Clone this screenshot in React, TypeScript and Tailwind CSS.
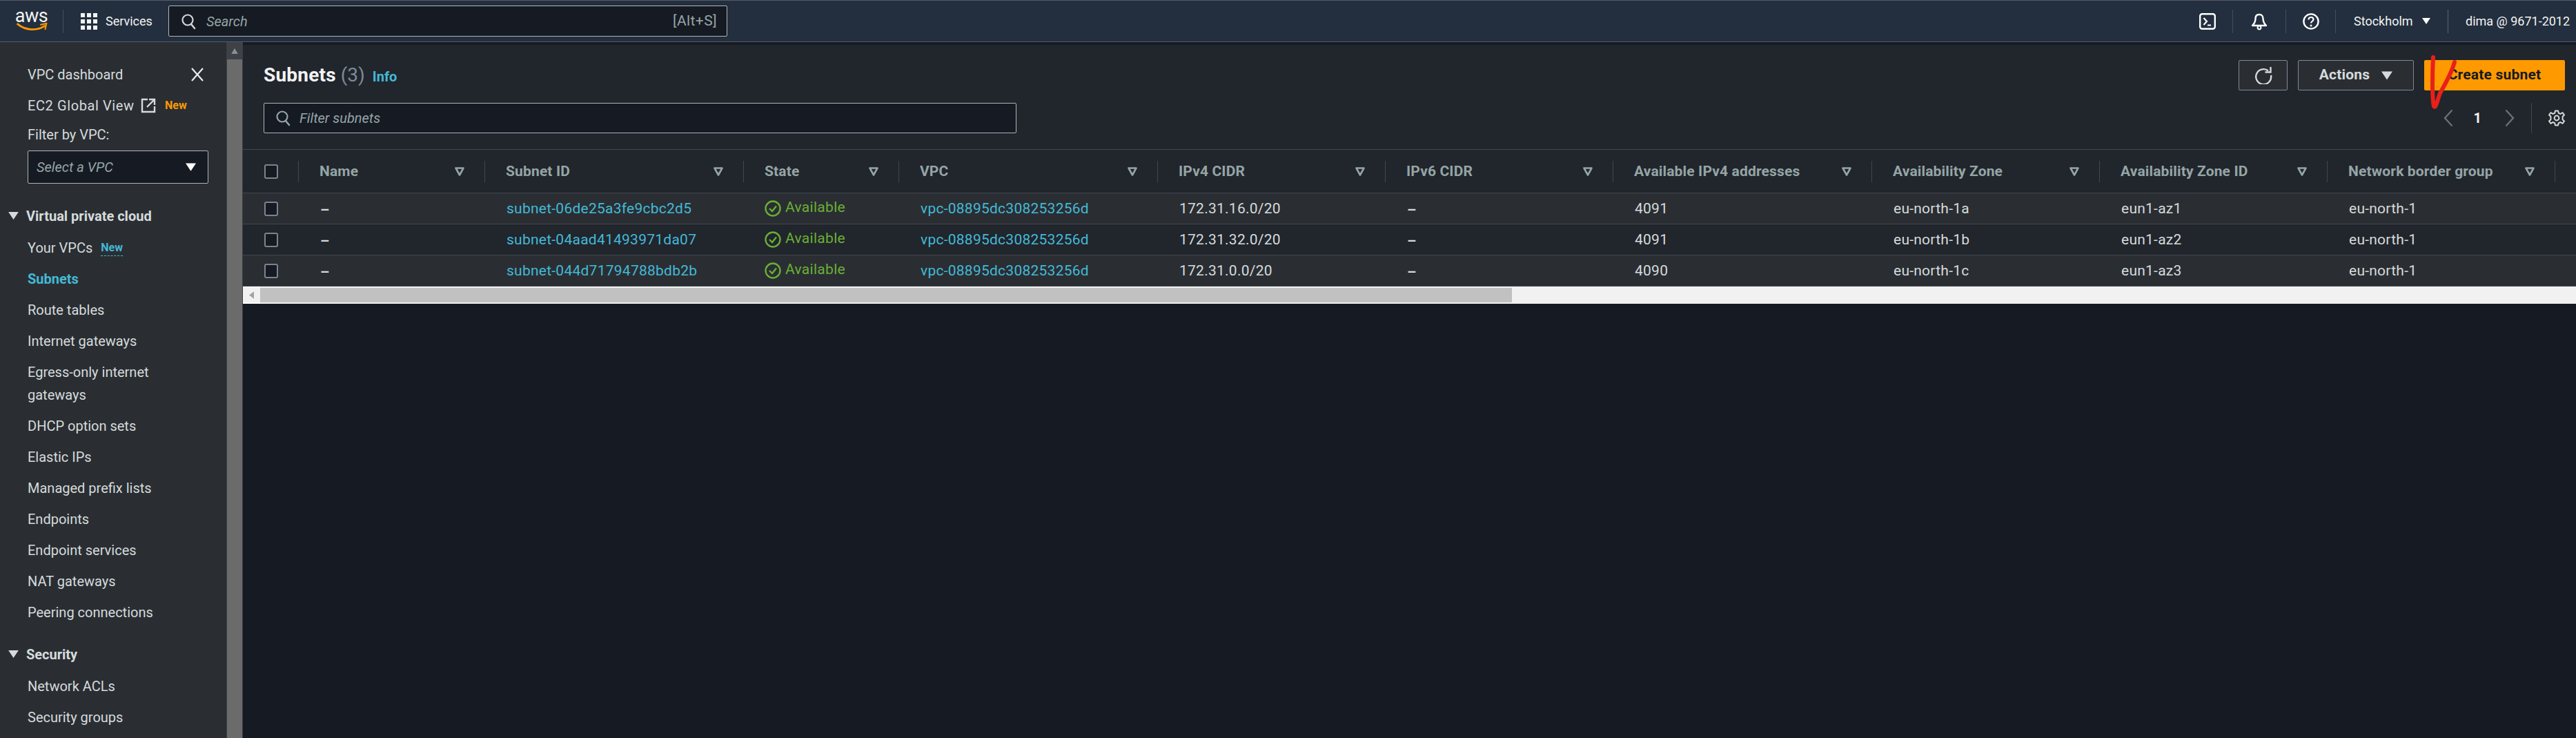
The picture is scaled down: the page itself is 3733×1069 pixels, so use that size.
import React from "react";

const F = "font-['Roboto','Liberation_Sans',sans-serif]";

function Caret({ className = "" }: { className?: string }) {
  return (
    <svg viewBox="0 0 16 12" className={className} aria-hidden="true">
      <path d="M0 0H16L8 12Z" fill="currentColor" />
    </svg>
  );
}

function Funnel() {
  return (
    <svg viewBox="0 0 14 13" className="h-[13px] w-[14px] shrink-0 text-[#95a5a6]" aria-hidden="true">
      <path d="M1.5 1.5H12.5L7 11.5Z" fill="none" stroke="currentColor" strokeWidth="2.6" strokeLinejoin="round" />
    </svg>
  );
}

function SearchIcon({ color }: { color: string }) {
  return (
    <svg viewBox="0 0 24 24" className={`h-[24px] w-[24px] ${color}`} aria-hidden="true">
      <circle cx="11" cy="10" r="7.5" fill="none" stroke="currentColor" strokeWidth="2.2" />
      <path d="M16 16L21 22" stroke="currentColor" strokeWidth="2.6" strokeLinecap="round" />
    </svg>
  );
}

function Check() {
  return <div className="h-[21px] w-[20px] rounded-[3px] border-2 border-[#7b848c] bg-[#161a23]" />;
}

function Divider({ strong = false }: { strong?: boolean }) {
  return <div className={`h-[34px] w-px ${strong ? "bg-[#5a6472]" : "bg-[#414d5c]"}`} />;
}

function TopBar() {
  return (
    <header className="flex h-[61px] shrink-0 items-center border-y border-y-[#545b64] bg-[#232f3e] text-white">
      <div className="flex w-[91px] shrink-0 flex-col items-center">
        <span className="mt-[-4px] text-[27px] leading-[22px] tracking-[-0.5px] text-[#f2f3f3]">aws</span>
        <svg viewBox="0 0 48 14" className="mt-[-1px] h-[13px] w-[48px]" aria-hidden="true">
          <path d="M2 2C14 12 32 13 44 5" fill="none" stroke="#ff9900" strokeWidth="3" strokeLinecap="round" />
          <path d="M38 3L47 1L45 10" fill="none" stroke="#ff9900" strokeWidth="2.2" strokeLinecap="round" />
        </svg>
      </div>
      <Divider />
      <svg viewBox="0 0 24 24" className="ml-[25px] h-[24px] w-[24px] shrink-0" aria-hidden="true">
        <g fill="#f2f3f3">
          <rect x="0" y="0" width="6" height="6" /><rect x="9" y="0" width="6" height="6" /><rect x="18" y="0" width="6" height="6" />
          <rect x="0" y="9" width="6" height="6" /><rect x="9" y="9" width="6" height="6" /><rect x="18" y="9" width="6" height="6" />
          <rect x="0" y="18" width="6" height="6" /><rect x="9" y="18" width="6" height="6" /><rect x="18" y="18" width="6" height="6" />
        </g>
      </svg>
      <span className="ml-[12px] w-[91px] shrink-0 text-[18px] text-[#f2f3f3]">Services</span>
      <div className="flex h-[45px] w-[810px] shrink-0 items-center rounded-[2px] border border-[#aab7b8] bg-[#161a23] pl-[16px] pr-[14px]">
        <SearchIcon color="text-[#d1d5db]" />
        <span className="ml-[14px] flex-1 text-[20px] italic text-[#95a5a6]">Search</span>
        <span className="text-[21px] tracking-[0.4px] text-[#95a5a6]">[Alt+S]</span>
      </div>
      <div className="flex-1" />
      <svg viewBox="0 0 24 24" className="h-[24px] w-[24px] shrink-0" aria-hidden="true">
        <rect x="1.2" y="1.2" width="21.6" height="21.6" rx="3" fill="none" stroke="#fff" strokeWidth="2.4" />
        <path d="M6.5 7L11 12L6.5 17" fill="none" stroke="#fff" strokeWidth="2.2" />
        <path d="M12 17.5H17" stroke="#fff" strokeWidth="2" />
      </svg>
      <div className="ml-[24px]"><Divider /></div>
      <div className="flex w-[76px] shrink-0 justify-center">
        <svg viewBox="0 0 24 24" className="h-[26px] w-[24px]" aria-hidden="true">
          <path d="M12 2C8 2 6.5 5 6.5 8C6.5 13 5 15 2 18H22C19 15 17.5 13 17.5 8C17.5 5 16 2 12 2Z" fill="none" stroke="#fff" strokeWidth="2.4" strokeLinejoin="round" />
          <circle cx="12" cy="21" r="2.4" fill="none" stroke="#fff" strokeWidth="2" />
        </svg>
      </div>
      <Divider />
      <div className="flex w-[71px] shrink-0 justify-center">
        <svg viewBox="0 0 24 24" className="h-[24px] w-[24px]" aria-hidden="true">
          <circle cx="12" cy="12" r="10.6" fill="none" stroke="#fff" strokeWidth="2.4" />
          <path d="M8.5 9.5C8.5 7.3 10 6 12 6C14 6 15.5 7.3 15.5 9.2C15.5 11.5 12 12 12 14.6" fill="none" stroke="#fff" strokeWidth="2.2" />
          <circle cx="12" cy="18" r="1.5" fill="#fff" />
        </svg>
      </div>
      <Divider />
      <span className="ml-[26px] w-[88px] shrink-0 whitespace-nowrap text-[18px] text-[#f2f3f3]">Stockholm</span>
      <Caret className="ml-[11px] h-[9px] w-[12px] shrink-0 text-white" />
      <div className="ml-[25px]"><Divider strong /></div>
      <span className="ml-[25px] w-[160px] shrink-0 overflow-hidden whitespace-nowrap text-[18px] text-[#f2f3f3]">dima @ 9671-2012</span>
    </header>
  );
}

function NavItem({ children, active = false }: { children: React.ReactNode; active?: boolean }) {
  return (
    <div className={`flex min-h-[45px] items-center pb-[4px] pl-[40px] pr-[70px] pt-[8px] text-[20px] leading-[33px] ${active ? "font-bold text-[#44b9d6]" : "text-[#d5dbdb]"}`}>
      {children}
    </div>
  );
}

function NavHeading({ children, className = "" }: { children: React.ReactNode; className?: string }) {
  return (
    <div className={`flex h-[45px] items-center whitespace-nowrap pl-[12px] text-[20px] font-bold text-[#d5dbdb] ${className}`}>
      <Caret className="h-[11px] w-[15px] shrink-0" />
      <span className="ml-[11px]">{children}</span>
    </div>
  );
}

function Sidebar() {
  return (
    <aside className="flex w-[328px] shrink-0 flex-col overflow-hidden bg-[#2a2e33] pt-[24px]">
      <div className="flex h-[45px] items-center pl-[40px] pr-[32px] text-[20px] text-[#d5dbdb]">
        <span className="flex-1">VPC dashboard</span>
        <svg viewBox="0 0 20 20" className="h-[20px] w-[20px] text-[#eaeded]" aria-hidden="true">
          <path d="M2 1L18 19M18 1L2 19" stroke="currentColor" strokeWidth="2.2" />
        </svg>
      </div>
      <div className="flex h-[45px] items-center pl-[40px] text-[20px] text-[#d5dbdb]">
        <span className="w-[160px] whitespace-nowrap tracking-[0.6px]">EC2 Global View</span>
        <svg viewBox="0 0 22 22" className="ml-[4px] h-[22px] w-[22px]" aria-hidden="true">
          <path d="M10 2H2V20H20V12" fill="none" stroke="#d5dbdb" strokeWidth="2.4" />
          <path d="M9 13L19 3M12 2H20V10" fill="none" stroke="#d5dbdb" strokeWidth="2.4" />
        </svg>
        <span className="ml-[13px] text-[16px] font-bold text-[#ff9900]">New</span>
      </div>
      <div className="ml-[40px] flex h-[40px] items-center text-[20px] text-[#d5dbdb]">Filter by VPC:</div>
      <div className="ml-[40px] mt-[3px] flex h-[48px] w-[262px] items-center justify-between rounded-[2px] border border-[#aab7b8] bg-[#161a23] pl-[12px] pr-[17px]">
        <span className="text-[20px] italic text-[#95a5a6]">Select a VPC</span>
        <Caret className="h-[12px] w-[15px] text-white" />
      </div>
      <NavHeading className="mt-[24px]">Virtual private cloud</NavHeading>
      <NavItem>
        <span className="whitespace-nowrap">Your VPCs</span>
        <span className="ml-[12px] border-b border-dashed border-[#44b9d6] text-[16px] leading-[22px] font-bold text-[#44b9d6]">New</span>
      </NavItem>
      <NavItem active>Subnets</NavItem>
      <NavItem>Route tables</NavItem>
      <NavItem>Internet gateways</NavItem>
      <NavItem>Egress-only internet gateways</NavItem>
      <NavItem>DHCP option sets</NavItem>
      <NavItem>Elastic IPs</NavItem>
      <NavItem>Managed prefix lists</NavItem>
      <NavItem>Endpoints</NavItem>
      <NavItem>Endpoint services</NavItem>
      <NavItem>NAT gateways</NavItem>
      <NavItem>Peering connections</NavItem>
      <NavHeading className="mt-[17px]">Security</NavHeading>
      <NavItem>Network ACLs</NavItem>
      <NavItem>Security groups</NavItem>
    </aside>
  );
}

function SideScrollbar() {
  return (
    <div className="flex w-[24px] shrink-0 flex-col border-x border-x-[#3a3f45] bg-[#3e4247]">
      <div className="flex h-[25px] items-center justify-center">
        <svg viewBox="0 0 12 10" className="h-[8px] w-[10px] text-[#8a8f94]" aria-hidden="true">
          <path d="M0 10L6 0L12 10Z" fill="currentColor" />
        </svg>
      </div>
      <div className="flex-1 bg-[#6b6b6b]" />
    </div>
  );
}

const columns = "grid-cols-[81px_270px_375px_225px_375px_330px_330px_375px_330px_330px_330px_1fr]";
const heads = ["Name", "Subnet ID", "State", "VPC", "IPv4 CIDR", "IPv6 CIDR", "Available IPv4 addresses", "Availability Zone", "Availability Zone ID", "Network border group"];

const rows = [
  ["subnet-06de25a3fe9cbc2d5", "172.31.16.0/20", "4091", "eu-north-1a", "eun1-az1"],
  ["subnet-04aad41493971da07", "172.31.32.0/20", "4091", "eu-north-1b", "eun1-az2"],
  ["subnet-044d71794788bdb2b", "172.31.0.0/20", "4090", "eu-north-1c", "eun1-az3"],
];

function StateCell() {
  return (
    <div className="flex items-center pl-[30px] text-[#6aaf35]">
      <svg viewBox="0 0 24 24" className="h-[24px] w-[24px] shrink-0" aria-hidden="true">
        <circle cx="12" cy="12" r="10.5" fill="none" stroke="currentColor" strokeWidth="2.4" />
        <path d="M7 12L11 16L17 8.5" fill="none" stroke="currentColor" strokeWidth="2.4" />
      </svg>
      <span className="ml-[6px] mt-[-3px] text-[21px] tracking-[0.3px]">Available</span>
    </div>
  );
}

function Cell({ children, link = false }: { children: React.ReactNode; link?: boolean }) {
  return (
    <div className={`flex items-center pl-[31px] pt-[2px] text-[21px] tracking-[0.25px] whitespace-nowrap ${link ? "text-[#44b9d6]" : "text-[#d5dbdb]"}`}>
      {children}
    </div>
  );
}

function Dash() {
  return <div className="flex items-center pl-[31px] pt-[5px] text-[21px] font-bold text-[#d5dbdb]">–</div>;
}

function SubnetTable() {
  return (
    <div>
      <div className={`grid h-[64px] ${columns} items-center border-y border-y-[#414750] bg-[#21252c]`}>
        <div className="flex h-[31px] items-center border-r border-r-[#414750] pl-[31px]"><Check /></div>
        {heads.map((h) => (
          <div key={h} className="flex h-[31px] items-center justify-between whitespace-nowrap border-r border-r-[#414750] pl-[30px] pr-[29px] text-[21px] font-bold tracking-[0.15px] text-[#95a5a6]">
            <span className="pt-[2px]">{h}</span>
            <Funnel />
          </div>
        ))}
      </div>
      {rows.map((r, i) => (
        <div key={r[0]} className={`grid h-[45px] ${columns} border-b border-b-[#414750] ${i % 2 === 0 ? "bg-[#2a2e33]" : "bg-[#21252c]"}`}>
          <div className="flex items-center pl-[31px]"><Check /></div>
          <Dash />
          <Cell link>{r[0]}</Cell>
          <StateCell />
          <Cell link>vpc-08895dc308253256d</Cell>
          <Cell>{r[1]}</Cell>
          <Dash />
          <Cell>{r[2]}</Cell>
          <Cell>{r[3]}</Cell>
          <Cell>{r[4]}</Cell>
          <Cell>eu-north-1</Cell>
          <div />
        </div>
      ))}
      <div className="flex h-[25px] items-center bg-[#f1f1f1]">
        <div className="flex h-full w-[25px] items-center justify-center border-y-2 border-y-white">
          <svg viewBox="0 0 8 12" className="h-[11px] w-[7px] text-[#a3a3a3]" aria-hidden="true">
            <path d="M8 0V12L0 6Z" fill="currentColor" />
          </svg>
        </div>
        <div className="h-[21px] w-[1814px] bg-[#c1c1c1]" />
      </div>
    </div>
  );
}

function Panel() {
  return (
    <section className="bg-[#21252c]">
      <div className="flex items-start justify-between pb-[23px] pl-[30px] pr-[16px] pt-[22px]">
        <div className="flex flex-col">
          <div className="flex h-[44px] items-center">
            <h1 className="text-[28px] font-bold tracking-[0.2px] text-[#f2f3f3]">Subnets</h1>
            <span className="ml-[7px] text-[28px] text-[#7d8998]">(3)</span>
            <span className="ml-[11px] mt-[3px] text-[20px] font-bold text-[#44b9d6]">Info</span>
          </div>
          <div className="mt-[18px] flex h-[44px] w-[1091px] items-center rounded-[2px] border border-[#aab7b8] bg-[#161a23] pl-[15px]">
            <SearchIcon color="text-[#95a5a6]" />
            <span className="ml-[12px] text-[20px] italic text-[#95a5a6]">Filter subnets</span>
          </div>
        </div>
        <div className="flex flex-col items-end">
          <div className="flex h-[44px] gap-[15px]">
            <div className="flex w-[71px] items-center justify-center rounded-[2px] border border-[#7d8998] bg-[#2a2e33]">
              <svg viewBox="0 0 26 26" className="h-[26px] w-[26px] text-[#d5dbdb]" aria-hidden="true">
                <path d="M20 6.5A11 11 0 1 0 24 13" fill="none" stroke="currentColor" strokeWidth="2.4" />
                <path d="M23.5 1V8.5H15.5" fill="none" stroke="currentColor" strokeWidth="2.4" />
              </svg>
            </div>
            <div className="flex w-[168px] items-center justify-center gap-[17px] rounded-[2px] border border-[#7d8998] bg-[#2a2e33] text-[21px] font-bold tracking-[0.2px] text-[#d5dbdb]">
              <span>Actions</span>
              <Caret className="h-[13px] w-[16px]" />
            </div>
            <div className="flex w-[204px] items-center justify-center rounded-[2px] bg-[#ff9900] text-[21px] font-bold tracking-[0.2px] text-[#161a23]">Create subnet</div>
          </div>
          <div className="mt-[18px] flex h-[44px] items-center">
            <svg viewBox="0 0 14 26" className="h-[26px] w-[14px] text-[#687078]" aria-hidden="true">
              <path d="M12.5 1.5L2 13L12.5 24.5" fill="none" stroke="currentColor" strokeWidth="2.4" />
            </svg>
            <span className="ml-[30px] mr-[34px] text-[20px] font-bold text-[#f2f3f3]">1</span>
            <svg viewBox="0 0 14 26" className="h-[26px] w-[14px] text-[#687078]" aria-hidden="true">
              <path d="M1.5 1.5L12 13L1.5 24.5" fill="none" stroke="currentColor" strokeWidth="2.4" />
            </svg>
            <div className="ml-[24px] mr-[24px] h-[44px] w-px bg-[#414750]" />
            <svg viewBox="0 0 24 24" className="h-[24px] w-[24px] text-[#d5dbdb]" aria-hidden="true">
              <path d="M10 1.5H14L14.8 4.8L17.6 6L20.5 4.2L23 7.5L20.6 9.8V14.2L23 16.5L20.5 19.8L17.6 18L14.8 19.2L14 22.5H10L9.2 19.2L6.4 18L3.5 19.8L1 16.5L3.4 14.2V9.8L1 7.5L3.5 4.2L6.4 6L9.2 4.8Z" fill="none" stroke="currentColor" strokeWidth="2" strokeLinejoin="round" />
              <circle cx="12" cy="12" r="3.4" fill="none" stroke="currentColor" strokeWidth="2" />
            </svg>
          </div>
        </div>
      </div>
      <SubnetTable />
    </section>
  );
}

export default function App() {
  return (
    <div className={`relative flex h-[1069px] w-[3733px] flex-col overflow-hidden bg-[#161a23] ${F}`}>
      <TopBar />
      <div className="flex min-h-0 flex-1">
        <Sidebar />
        <SideScrollbar />
        <main className="min-w-0 flex-1 pt-[4px]">
          <Panel />
        </main>
      </div>
      <svg viewBox="0 0 40 80" className="absolute left-[3522px] top-[80px] h-[80px] w-[40px]" aria-hidden="true">
        <path d="M4 3C3 20 2 60 5 74C8 78 10 65 14 55C22 40 30 28 35 10" fill="none" stroke="#e8201a" strokeWidth="6" strokeLinecap="round" strokeLinejoin="round" />
      </svg>
    </div>
  );
}
